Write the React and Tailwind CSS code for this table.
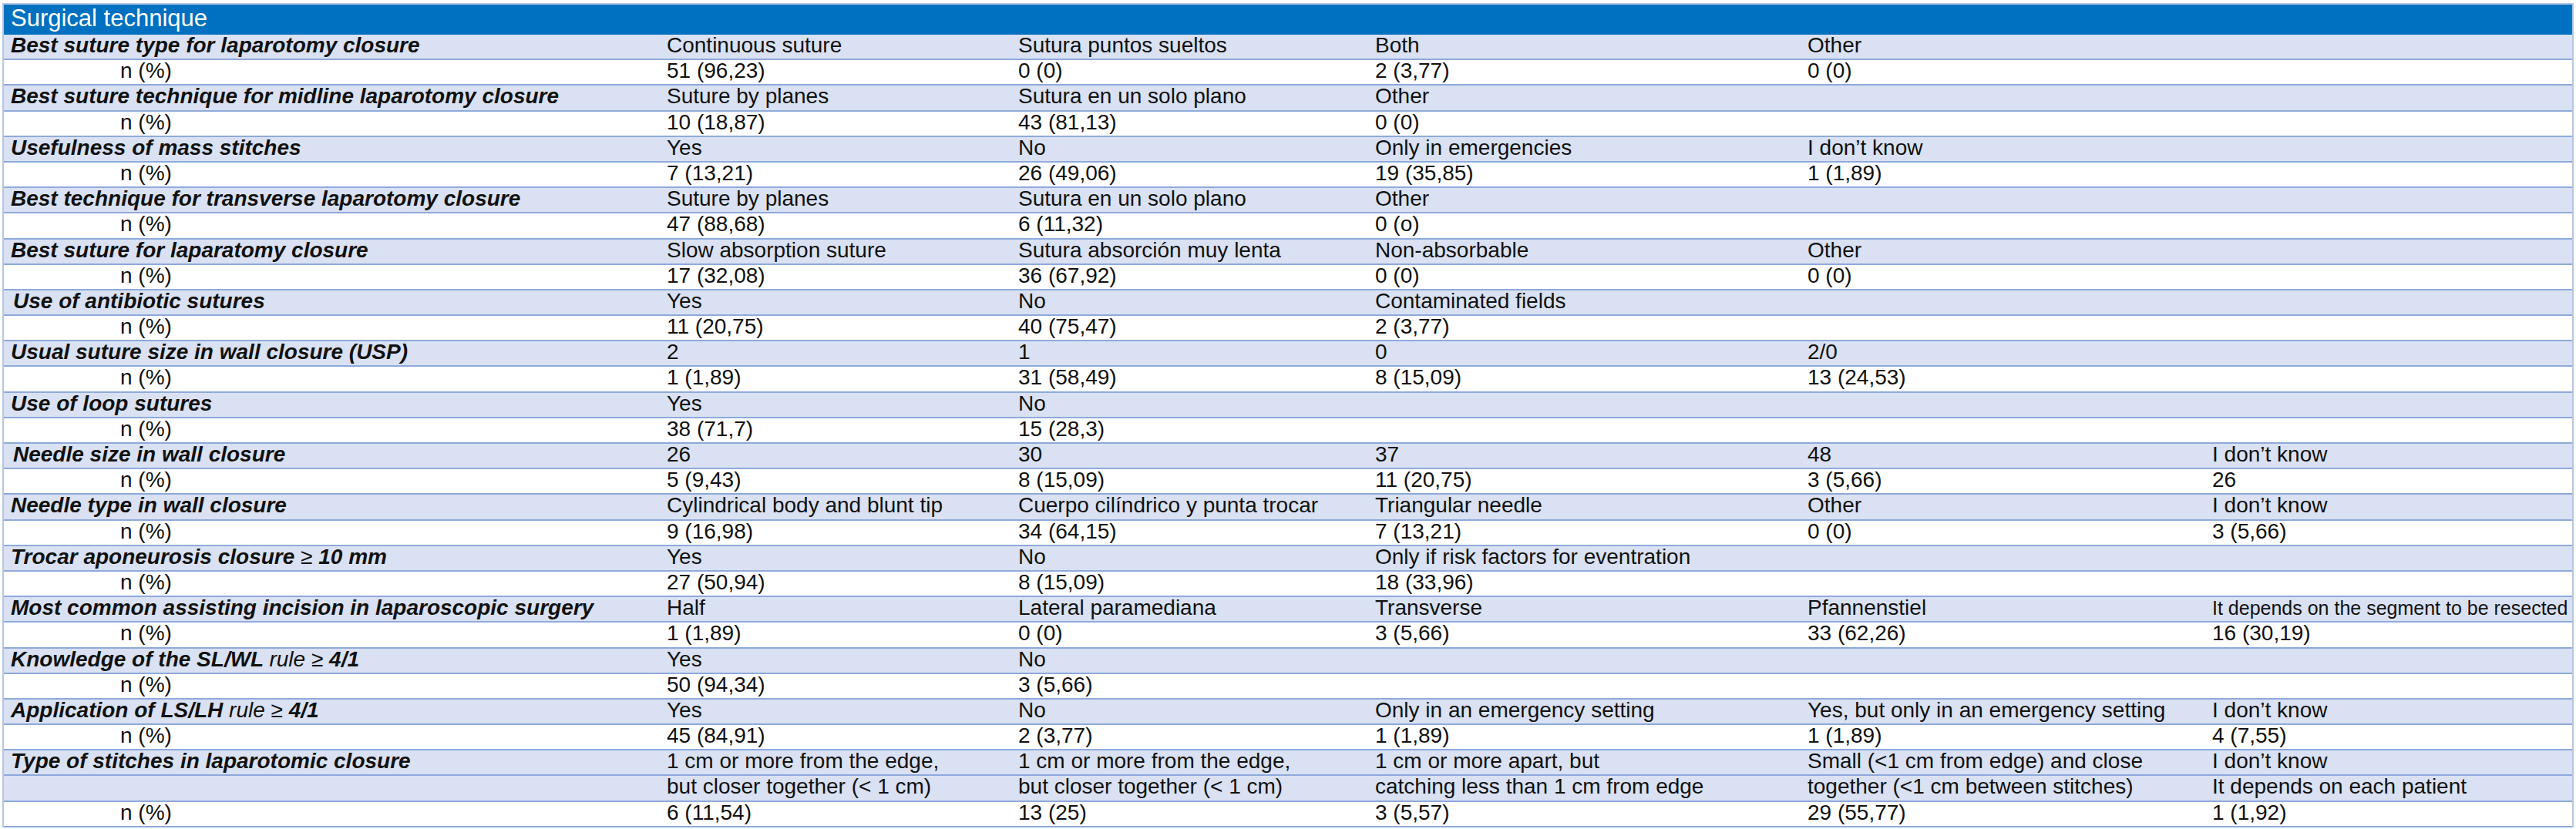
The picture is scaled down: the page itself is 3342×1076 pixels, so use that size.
import React from "react";

const rows = [
  { q: "Best suture type for laparotomy closure", c: ["Continuous suture", "Sutura puntos sueltos", "Both", "Other"] },
  { n: true, c: ["51 (96,23)", "0 (0)", "2 (3,77)", "0 (0)"] },
  { q: "Best suture technique for midline laparotomy closure", c: ["Suture by planes", "Sutura en un solo plano", "Other"] },
  { n: true, c: ["10 (18,87)", "43 (81,13)", "0 (0)"] },
  { q: "Usefulness of mass stitches", c: ["Yes", "No", "Only in emergencies", "I don’t know"] },
  { n: true, c: ["7 (13,21)", "26 (49,06)", "19 (35,85)", "1 (1,89)"] },
  { q: "Best technique for transverse laparotomy closure", c: ["Suture by planes", "Sutura en un solo plano", "Other"] },
  { n: true, c: ["47 (88,68)", "6 (11,32)", "0 (o)"] },
  { q: "Best suture for laparatomy closure", c: ["Slow absorption suture", "Sutura absorción muy lenta", "Non-absorbable", "Other"] },
  { n: true, c: ["17 (32,08)", "36 (67,92)", "0 (0)", "0 (0)"] },
  { q: "Use of antibiotic sutures", indent: true, c: ["Yes", "No", "Contaminated fields"] },
  { n: true, c: ["11 (20,75)", "40 (75,47)", "2 (3,77)"] },
  { q: "Usual suture size in wall closure (USP)", c: ["2", "1", "0", "2/0"] },
  { n: true, c: ["1 (1,89)", "31 (58,49)", "8 (15,09)", "13 (24,53)"] },
  { q: "Use of loop sutures", c: ["Yes", "No"] },
  { n: true, c: ["38 (71,7)", "15 (28,3)"] },
  { q: "Needle size in wall closure", indent: true, c: ["26", "30", "37", "48", "I don’t know"] },
  { n: true, c: ["5 (9,43)", "8 (15,09)", "11 (20,75)", "3 (5,66)", "26"] },
  { q: "Needle type in wall closure", c: ["Cylindrical body and blunt tip", "Cuerpo cilíndrico y punta trocar", "Triangular needle", "Other", "I don’t know"] },
  { n: true, c: ["9 (16,98)", "34 (64,15)", "7 (13,21)", "0 (0)", "3 (5,66)"] },
  { q: ["Trocar aponeurosis closure ", "≥", " 10 mm"], c: ["Yes", "No", "Only if risk factors for eventration"] },
  { n: true, c: ["27 (50,94)", "8 (15,09)", "18 (33,96)"] },
  { q: "Most common assisting incision in laparoscopic surgery", c: ["Half", "Lateral paramediana", "Transverse", "Pfannenstiel", "It depends on the segment to be resected"], small: 4 },
  { n: true, c: ["1 (1,89)", "0 (0)", "3 (5,66)", "33 (62,26)", "16 (30,19)"] },
  { q: ["Knowledge of the SL/WL ", "rule ≥", " 4/1"], c: ["Yes", "No"] },
  { n: true, c: ["50 (94,34)", "3 (5,66)"] },
  { q: ["Application of LS/LH ", "rule ≥", " 4/1"], c: ["Yes", "No", "Only in an emergency setting", "Yes, but only in an emergency setting", "I don’t know"] },
  { n: true, c: ["45 (84,91)", "2 (3,77)", "1 (1,89)", "1 (1,89)", "4 (7,55)"] },
  { q: "Type of stitches in laparotomic closure", c: ["1 cm or more from the edge,", "1 cm or more from the edge,", "1 cm or more apart, but", "Small (<1 cm from edge) and close", "I don’t know"] },
  { q: "", c: ["but closer together (< 1 cm)", "but closer together (< 1 cm)", "catching less than 1 cm from edge", "together (<1 cm between stitches)", "It depends on each patient"] },
  { n: true, c: ["6 (11,54)", "13 (25)", "3 (5,57)", "29 (55,77)", "1 (1,92)"] },
];

function Label({ q }) {
  if (Array.isArray(q)) {
    return (
      <>
        <span className="font-bold">{q[0]}</span>
        <span className="font-normal">{q[1]}</span>
        <span className="font-bold">{q[2]}</span>
      </>
    );
  }
  return <span className="font-bold">{q}</span>;
}

export default function App() {
  return (
    <div
      className="bg-white pt-[4px] px-[3px] text-[#111]"
      style={{ fontFamily: '"Liberation Sans", Arial, sans-serif' }}
    >
      <div className="border-x-2 border-t-2 border-[#b4c6e7]">
        <div className="h-[39px] bg-[#0070c0] pl-[9px] text-[31px] leading-[36px] text-white">
          Surgical technique
        </div>
        {rows.map((r, i) => (
          <div
            key={i}
            className={
              "grid h-[33.2px] grid-cols-[860px_456px_463px_561px_525px_1fr] border-b-2 border-[#8eaadb] text-[28px] leading-[28px] whitespace-nowrap " +
              (r.n ? "bg-white" : "bg-[#d9e1f2]")
            }
          >
            <div className={r.n ? "pl-[151px]" : r.indent ? "pl-[12px] italic" : "pl-[9px] italic"}>
              {r.n ? "n (%)" : <Label q={r.q} />}
            </div>
            {[0, 1, 2, 3, 4].map((j) => (
              <div key={j} className={r.small === j ? "text-[25px]" : ""}>
                {r.c[j] || ""}
              </div>
            ))}
          </div>
        ))}
      </div>
    </div>
  );
}
